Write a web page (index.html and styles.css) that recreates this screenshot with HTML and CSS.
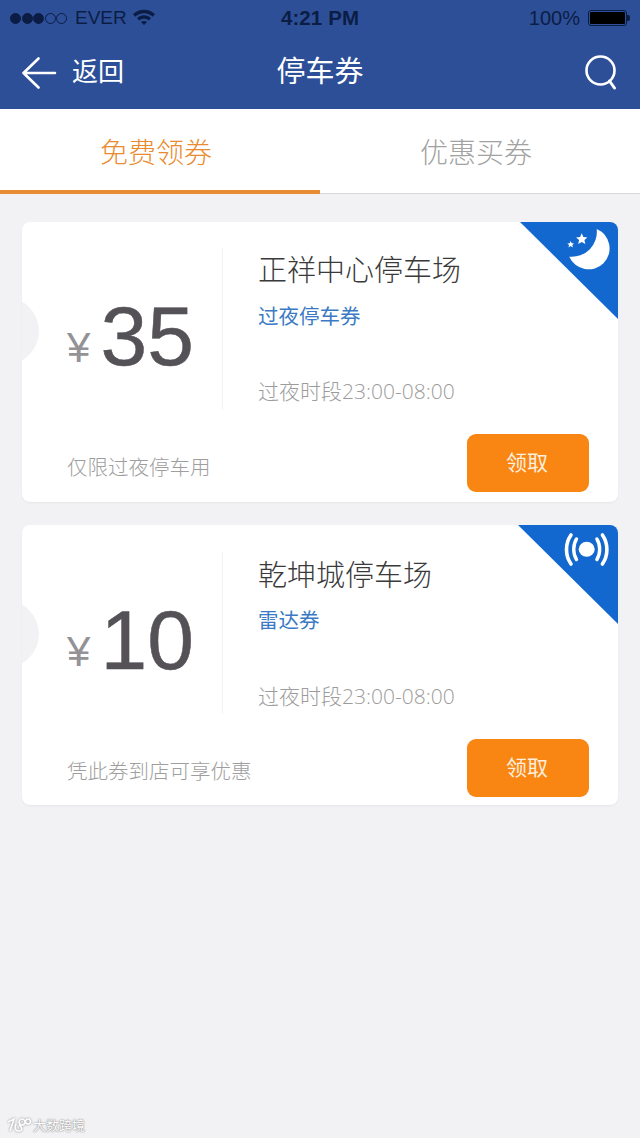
FILE: index.html
```html
<!DOCTYPE html>
<html lang="zh-CN">
<head>
<meta charset="utf-8">
<title>停车券</title>
<link rel="stylesheet" href="styles.css">
</head>
<body>
<header class="top">
  <div class="status">
    <div class="status-left">
      <span class="dots"><i class="dot on"></i><i class="dot on"></i><i class="dot on"></i><i class="dot"></i><i class="dot"></i></span>
      <span class="carrier">EVER</span>
      <svg class="wifi" width="22" height="16" viewBox="0 0 22 16"><path d="M0 5.200C6 -.6 16 -.6 22 5.200L19.800 7.700C15 3 7 3 2.200 7.700Z M4 9.200C8 5.400 14 5.400 18 9.200L15.700 11.600C13 9 9 9 6.300 11.600Z M8 13C9.800 11.500 12.200 11.500 14 13L11 16Z" fill="#0c1d45"/></svg>
    </div>
    <div class="clock">4:21 PM</div>
    <div class="status-right">
      <span class="pct">100%</span>
      <span class="battery"><i class="battery-fill"></i></span><i class="battery-nub"></i>
    </div>
  </div>
  <nav class="nav">
    <div class="back">
      <svg class="back-icon" width="35" height="32" viewBox="0 0 35 32"><path d="M16.500 1.500 1.500 16 16.500 30.500M1.500 16H33" fill="none" stroke="#fff" stroke-width="2.600" stroke-linecap="round" stroke-linejoin="round"/></svg>
      <span class="back-label">返回</span>
    </div>
    <h1 class="title">停车券</h1>
    <div class="search">
      <svg width="36" height="36" viewBox="0 0 36 36"><circle cx="16.500" cy="15.500" r="14" fill="none" stroke="#fff" stroke-width="2.600"/><path d="M25.500 26 30.500 33" fill="none" stroke="#fff" stroke-width="3" stroke-linecap="round"/></svg>
    </div>
  </nav>
</header>

<div class="tabs">
  <div class="tab active">免费领券</div>
  <div class="tab">优惠买券</div>
</div>

<main class="list">
  <article class="card">
    <i class="notch"></i>
    <svg class="ribbon" width="98" height="97" viewBox="0 0 98 97">
      <path d="M0 0H98V97Z" fill="#1368cf"/>
      <path d="M76.700 7A21 21 0 1 1 49.300 34.700A25 25 0 0 0 76.700 7Z" fill="#fff"/>
      <path d="M61.700 11.300l1.700 3.700 4 .4-3 2.600 1 4-3.700-2.100-3.500 2.100.9-4-3-2.600 4-.4Z" fill="#fff"/>
      <path d="M50.700 19l1 2.200 2.400.2-1.800 1.600.6 2.400-2.200-1.300-2.200 1.300.6-2.400-1.800-1.600 2.400-.2Z" fill="#fff"/>
    </svg>
    <div class="main">
      <div class="amount">
        <span class="yen">¥</span>
        <span class="value">35</span>
      </div>
      <div class="info">
        <h2 class="name">正祥中心停车场</h2>
        <p class="kind">过夜停车券</p>
        <p class="period">过夜时段23:00-08:00</p>
      </div>
    </div>
    <div class="foot">
      <span class="note">仅限过夜停车用</span>
      <button class="claim">领取</button>
    </div>
  </article>

  <article class="card card-alt">
    <i class="notch"></i>
    <svg class="ribbon ribbon-alt" width="100" height="99" viewBox="0 0 100 99">
      <path d="M0 0H100V99Z" fill="#1368cf"/>
      <ellipse cx="68.700" cy="24.300" rx="8" ry="7.500" fill="#fff"/>
      <path d="M58.500 14C54.800 19.800 54.800 29 58.500 34.500M78.900 14C82.600 19.800 82.600 29 78.900 34.500" fill="none" stroke="#fff" stroke-width="3.400" stroke-linecap="round"/>
      <path d="M53 10C47 18.500 47 30.500 53 39M84.400 10C90.400 18.500 90.400 30.500 84.400 39" fill="none" stroke="#fff" stroke-width="3.600" stroke-linecap="round"/>
    </svg>
    <div class="main">
      <div class="amount">
        <span class="yen">¥</span>
        <span class="value">10</span>
      </div>
      <div class="info">
        <h2 class="name">乾坤城停车场</h2>
        <p class="kind">雷达券</p>
        <p class="period">过夜时段23:00-08:00</p>
      </div>
    </div>
    <div class="foot">
      <span class="note">凭此券到店可享优惠</span>
      <button class="claim">领取</button>
    </div>
  </article>
</main>

<div class="mark">
  <svg class="mark-logo" width="26" height="18" viewBox="0 0 26 18"><path d="M2 6 8 3 4 15M10 8C8 11 9 15 13 15S16 10 13 9M16 3a3 3 0 1 0 .1 0M22 3a2.500 2.500 0 1 0 .1 0" fill="none" stroke="#fff" stroke-width="1.600"/></svg>
  <span>大数跨境</span>
</div>
</body>
</html>
```

FILE: styles.css
```css
* { box-sizing: border-box; }

html, body { margin: 0; padding: 0; }

body {
  position: relative;
  width: 640px;
  height: 1138px;
  overflow: hidden;
  background: #f2f1f4;
  font-family: "Open Sans", "Noto Sans CJK SC", sans-serif;
}

.top { background: #2d4f98; height: 109px; }

.status {
  display: grid;
  grid-template-columns: 1fr auto 1fr;
  align-items: center;
  height: 36px;
  padding: 0 10px;
  color: #0c1d45;
  font-family: "Liberation Sans", sans-serif;
  font-size: 20px;
}

.status-left { display: flex; align-items: center; }

.dots { display: flex; gap: .5px; }

.dot {
  width: 11px;
  height: 11px;
  border: 1px solid #0c1d45;
  border-radius: 50%;
}

.dot.on { background: #0c1d45; }

.carrier { margin-left: 8px; font-size: 19px; }

.wifi { margin-left: 6px; margin-top: -3px; }

.clock { font-size: 20.500px; font-weight: 700; letter-spacing: .1px; }

.status-right { display: flex; align-items: center; justify-content: flex-end; }

.pct { margin-right: 8px; }

.battery {
  display: block;
  width: 39px;
  height: 16px;
  padding: 1px;
  border: 1px solid #0c1d45;
  border-radius: 3px;
}

.battery-fill { display: block; height: 100%; background: #000; border-radius: 1px; }

.battery-nub { width: 3px; height: 6px; background: #0c1d45; border-radius: 0 2px 2px 0; }

.nav {
  display: grid;
  grid-template-columns: 1fr auto 1fr;
  align-items: center;
  height: 73px;
  padding: 0 22px;
  color: #fff;
}

.back { display: flex; align-items: center; gap: 15px; font-size: 26px; }

.back-label { margin-top: -5px; }

.title { margin: 0; font-size: 29px; font-weight: 400; line-height: 1.200; margin-top: -3px; }

.search { display: flex; justify-content: flex-end; margin-right: -2px; }

.tabs { display: flex; height: 85px; background: #fff; }

.tab {
  flex: 1;
  display: flex;
  align-items: center;
  justify-content: center;
  padding: 0 8px 0 0;
  border-bottom: 1px solid #d8d8d8;
  font-size: 28px;
  font-weight: 300;
  color: #a2a2a2;
}

.tab.active { border-bottom: 4px solid #e98c31; padding-top: 2px; color: #e98c31; }

.list {
  display: flex;
  flex-direction: column;
  gap: 23px;
  padding: 28px 22px 0;
}

.card {
  position: relative;
  height: 280px;
  padding-top: 26px;
  overflow: hidden;
  background: #fff;
  border-radius: 8px;
  box-shadow: 0 1px 2px rgba(0, 0, 0, .05);
}

.card-alt { padding-top: 27px; }

.notch {
  position: absolute;
  left: -51px;
  top: 75px;
  width: 68px;
  height: 68px;
  border-radius: 50%;
  background: #f2f1f4;
}

.ribbon { position: absolute; top: 0; right: 0; }

.main { display: flex; height: 162px; }

.amount {
  display: flex;
  align-items: flex-start;
  justify-content: space-between;
  width: 201px;
  padding: 46px 28px 0 45px;
  border-right: 1px solid #f3f3f3;
  font-family: "Liberation Sans", sans-serif;
}

.yen { font-size: 42px; line-height: 1; margin-top: 33px; color: #949296; }

.value { font-size: 84px; line-height: 84px; color: #555257; -webkit-text-stroke: .5px #555257; }

.info { padding-left: 35px; }

.card-alt .info { padding-top: 1px; }

.name { margin: 0; height: 44px; font-size: 29px; line-height: 44px; font-weight: 300; color: #3a3a3a; }

.kind { margin: 10px 0 0; font-size: 20.500px; line-height: 28px; color: #3a7ac4; }

.card-alt .kind { margin-top: 9px; }

.period { margin: 47px 0 0; font-size: 21px; font-weight: 300; line-height: 28px; color: #9c9c9c; white-space: nowrap; }

.card-alt .period { margin-top: 48px; }

.foot {
  display: flex;
  align-items: center;
  justify-content: space-between;
  margin-top: 24px;
  padding: 0 29px 0 45px;
}

.card-alt .foot { margin-top: 25px; }

.note { padding-top: 6px; font-size: 20.500px; font-weight: 300; color: #9e9e9e; }

.card-alt .note { padding-top: 4px; }

.claim {
  width: 122px;
  height: 58px;
  padding: 0 2px 4px 0;
  border: 0;
  border-radius: 9px;
  background: #f98513;
  color: #fdeedd;
  font: inherit;
  font-size: 21px;
}

.mark {
  position: absolute;
  left: 6px;
  bottom: 4px;
  display: flex;
  align-items: center;
  gap: 1px;
  color: #fff;
  font-size: 13px;
  line-height: 18px;
  text-shadow: 0 0 2px #8a8a8a, 0 0 1px #8a8a8a;
}

.mark-logo { filter: drop-shadow(0 0 1px #8a8a8a); }
```
